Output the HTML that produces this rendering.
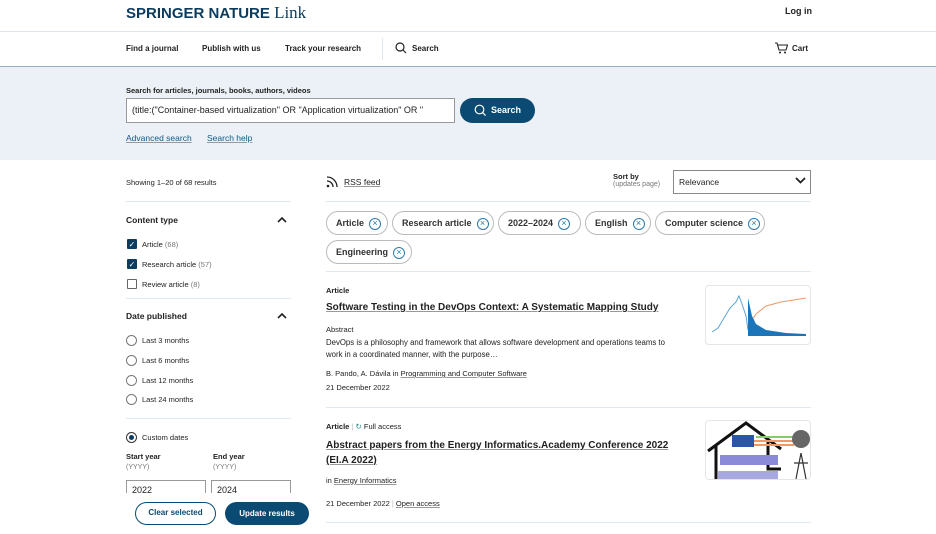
<!DOCTYPE html>
<html><head><meta charset="utf-8"><style>
*{margin:0;padding:0;box-sizing:border-box}
body{width:936px;height:534px;overflow:hidden;background:#fff;font-family:"Liberation Sans",sans-serif;color:#222;font-size:8px;position:relative}
.a{position:absolute;white-space:nowrap}
.b{font-weight:bold}
.u{text-decoration:underline;text-decoration-color:#999}
.hr{position:absolute;height:1px;background:#dfe9f2}
.chip{position:absolute;height:24px;border:1px solid #bbb;border-radius:12px;font-weight:bold;font-size:9px;line-height:22px;padding-left:9px;color:#333}
.x{display:inline-block;width:12px;height:12px;border:1.3px solid #2a7ab0;border-radius:50%;color:#2a7ab0;font-size:9px;line-height:9px;text-align:center;margin-left:5px;vertical-align:middle;font-weight:normal}
.cb{position:absolute;width:10px;height:10px;border:1px solid #666;border-radius:1px}
.cb.on{background:#0b3c5d;border-color:#0b3c5d;color:#fff;font-size:8px;line-height:9px;text-align:center}
.rd{position:absolute;width:11px;height:11px;border:1px solid #777;border-radius:50%}
.car{position:absolute}
</style></head><body>
<div class="a b" style="left:126px;top:3px;font-size:15px;color:#0b3c5d;letter-spacing:0px">SPRINGER NATURE <span style="font-family:'Liberation Serif',serif;font-weight:normal;font-size:17px">Link</span></div>
<div class="a b" style="left:785px;top:6px;font-size:9px">Log in</div>
<div class="hr" style="left:0;top:31px;width:936px;background:#dde6ee"></div>
<div class="a b" style="left:126px;top:44px">Find a journal</div>
<div class="a b" style="left:202px;top:44px">Publish with us</div>
<div class="a b" style="left:285px;top:44px">Track your research</div>
<div style="position:absolute;left:382px;top:38px;width:1px;height:22px;background:#dde6ee"></div>
<svg class="a" style="left:395px;top:42px" width="12" height="12" viewBox="0 0 12 12"><circle cx="5" cy="5" r="4" fill="none" stroke="#222" stroke-width="1.2"/><path d="M8 8l3 3" stroke="#222" stroke-width="1.2"/></svg>
<div class="a b" style="left:412px;top:44px">Search</div>
<svg class="a" style="left:775px;top:42px" width="13" height="12" viewBox="0 0 13 12"><path d="M0 1h2l2 7h7l1.5-5H3" fill="none" stroke="#222" stroke-width="1.1"/><circle cx="5" cy="10.5" r="1" fill="#222"/><circle cx="10" cy="10.5" r="1" fill="#222"/></svg>
<div class="a b" style="left:792px;top:44px">Cart</div>
<div style="position:absolute;left:0;top:66px;width:936px;height:94px;background:#ebf1f6;border-top:1px solid #99aab8"></div>
<div class="a b" style="left:126px;top:86px;font-size:7.5px">Search for articles, journals, books, authors, videos</div>
<div style="position:absolute;left:126px;top:98px;width:329px;height:25px;background:#fff;border:1px solid #999;overflow:hidden;font-size:9px;line-height:23px;padding-left:5px;white-space:nowrap">(title:("Container-based virtualization" OR "Application virtualization" OR "</div>
<div style="position:absolute;left:460px;top:98px;width:75px;height:25px;background:#0b4a72;border-radius:13px;color:#fff;font-weight:bold;font-size:9px;line-height:25px;padding-left:31px">Search</div>
<svg class="a" style="left:474px;top:104px" width="13" height="13" viewBox="0 0 13 13"><circle cx="5.5" cy="5.5" r="4.3" fill="none" stroke="#fff" stroke-width="1.2"/><path d="M8.6 8.6l3 3" stroke="#fff" stroke-width="1.2"/></svg>
<div class="a u" style="left:126px;top:133px;color:#0b5a8a;font-size:8.5px">Advanced search</div>
<div class="a u" style="left:207px;top:133px;color:#0b5a8a;font-size:8.5px">Search help</div>

<div class="a" style="left:126px;top:178px;font-size:7.5px">Showing 1–20 of 68 results</div>
<div class="hr" style="left:126px;top:201px;width:165px"></div>
<div class="a b" style="left:126px;top:215px;font-size:8.5px">Content type</div>
<svg class="car" style="left:277px;top:216px" width="10" height="7" viewBox="0 0 10 7"><path d="M1 6l4-4 4 4" fill="none" stroke="#222" stroke-width="1.6"/></svg>
<div class="cb on" style="left:127px;top:239px">✓</div><div class="a" style="left:142px;top:240px;font-size:7.5px">Article <span style="color:#777">(68)</span></div>
<div class="cb on" style="left:127px;top:259px">✓</div><div class="a" style="left:142px;top:260px;font-size:7.5px">Research article <span style="color:#777">(57)</span></div>
<div class="cb" style="left:127px;top:279px"></div><div class="a" style="left:142px;top:280px;font-size:7.5px">Review article <span style="color:#777">(8)</span></div>
<div class="hr" style="left:126px;top:298px;width:165px"></div>
<div class="a b" style="left:126px;top:311px;font-size:8.5px">Date published</div>
<svg class="car" style="left:277px;top:312px" width="10" height="7" viewBox="0 0 10 7"><path d="M1 6l4-4 4 4" fill="none" stroke="#222" stroke-width="1.6"/></svg>
<div class="rd" style="left:126px;top:335px"></div><div class="a" style="left:142px;top:336px;font-size:7.5px">Last 3 months</div>
<div class="rd" style="left:126px;top:355px"></div><div class="a" style="left:142px;top:356px;font-size:7.5px">Last 6 months</div>
<div class="rd" style="left:126px;top:375px"></div><div class="a" style="left:142px;top:376px;font-size:7.5px">Last 12 months</div>
<div class="rd" style="left:126px;top:394px"></div><div class="a" style="left:142px;top:395px;font-size:7.5px">Last 24 months</div>
<div class="hr" style="left:126px;top:418px;width:165px"></div>
<div class="rd" style="left:126px;top:432px;border-color:#333"><div style="position:absolute;left:2px;top:2px;width:5px;height:5px;border-radius:50%;background:#0b3c5d"></div></div>
<div class="a" style="left:142px;top:433px;font-size:7.5px">Custom dates</div>
<div class="a b" style="left:126px;top:452px;font-size:7.5px">Start year</div>
<div class="a" style="left:126px;top:464px;font-size:7px;color:#777">(YYYY)</div>
<div class="a b" style="left:213px;top:452px;font-size:7.5px">End year</div>
<div class="a" style="left:213px;top:464px;font-size:7px;color:#777">(YYYY)</div>
<div style="position:absolute;left:126px;top:480px;width:80px;height:20px;border:1px solid #999;border-bottom:none;font-size:9px;padding:4px 5px">2022</div>
<div style="position:absolute;left:211px;top:480px;width:80px;height:20px;border:1px solid #999;border-bottom:none;font-size:9px;padding:4px 5px">2024</div>
<div style="position:absolute;left:120px;top:493px;width:180px;height:41px;background:#fff;"></div>
<div style="position:absolute;left:135px;top:502px;width:81px;height:23px;border:1.5px solid #0b4a72;border-radius:12px;color:#0b4a72;font-weight:bold;font-size:8px;line-height:20px;text-align:center;background:#fff">Clear selected</div>
<div style="position:absolute;left:225px;top:502px;width:84px;height:23px;background:#0b4a72;border-radius:12px;color:#fff;font-weight:bold;font-size:8px;line-height:23px;text-align:center">Update results</div>

<svg class="a" style="left:326px;top:175px" width="13" height="13" viewBox="0 0 13 13"><circle cx="2" cy="11" r="1.3" fill="#222"/><path d="M1 6a6 6 0 0 1 6 6M1 2a10 10 0 0 1 10 10" fill="none" stroke="#222" stroke-width="1.3"/></svg>
<div class="a u" style="left:344px;top:177px;font-size:8.5px">RSS feed</div>
<div class="a b" style="left:613px;top:172px;font-size:7.5px">Sort by</div>
<div class="a" style="left:613px;top:181px;font-size:7px;color:#777">(updates page)</div>
<div style="position:absolute;left:673px;top:170px;width:138px;height:24px;border:1px solid #888;font-size:8.5px;line-height:22px;padding-left:5px">Relevance</div>
<svg class="a" style="left:795px;top:177px" width="11" height="8" viewBox="0 0 11 8"><path d="M1 1l4.5 4.5L10 1" fill="none" stroke="#222" stroke-width="1.8"/></svg>
<div class="hr" style="left:326px;top:201px;width:485px"></div>
<div class="chip" style="left:326px;top:211px;width:62px">Article<span class="x">×</span></div>
<div class="chip" style="left:392px;top:211px;width:102px">Research article<span class="x">×</span></div>
<div class="chip" style="left:498px;top:211px;width:83px">2022–2024<span class="x">×</span></div>
<div class="chip" style="left:585px;top:211px;width:66px">English<span class="x">×</span></div>
<div class="chip" style="left:655px;top:211px;width:110px">Computer science<span class="x">×</span></div>
<div class="chip" style="left:326px;top:240px;width:86px">Engineering<span class="x">×</span></div>
<div class="hr" style="left:326px;top:271px;width:485px"></div>
<div class="a b" style="left:326px;top:286px;font-size:7.5px">Article</div>
<div class="a b u" style="left:326px;top:302px;font-size:10px;color:#222">Software Testing in the DevOps Context: A Systematic Mapping Study</div>
<div class="a" style="left:326px;top:325px;font-size:7.5px">Abstract</div>
<div class="a" style="left:326px;top:337px;font-size:7.8px;line-height:12px">DevOps is a philosophy and framework that allows software development and operations teams to<br>work in a coordinated manner, with the purpose…</div>
<div class="a" style="left:326px;top:369px;font-size:7.5px">B. Pando, A. Dávila in <span class="u">Programming and Computer Software</span></div>
<div class="a" style="left:326px;top:383px;font-size:7.5px">21 December 2022</div>
<div style="position:absolute;left:705px;top:285px;width:106px;height:60px;border:1px solid #e5e5e5;border-radius:4px;overflow:hidden">
<svg width="106" height="60" viewBox="0 0 106 60"><path d="M6 46 L12 42 L18 32 L24 22 L30 16 L33 10 L36 18 L40 30 L42 44" fill="none" stroke="#5ba3d8" stroke-width="1"/><path d="M42 40 L50 28 L60 20 L75 16 L100 12" fill="none" stroke="#e89a6a" stroke-width="1"/><path d="M42 48 L42 12 L46 30 L50 38 L60 44 L80 47 L100 48 L100 50 L42 50Z" fill="#1b75b8"/></svg></div>
<div class="hr" style="left:326px;top:407px;width:485px"></div>
<div class="a" style="left:326px;top:422px;font-size:7.5px"><b>Article</b> <span style="color:#bbb">|</span> <span style="color:#2a8a8a">↻</span> Full access</div>
<div class="a b u" style="left:326px;top:438px;font-size:10px;line-height:15px">Abstract papers from the Energy Informatics.Academy Conference 2022<br>(EI.A 2022)</div>
<div class="a" style="left:326px;top:476px;font-size:7.5px">in <span class="u">Energy Informatics</span></div>
<div class="a" style="left:326px;top:499px;font-size:7.5px">21 December 2022 <span style="color:#bbb">|</span> <span class="u">Open access</span></div>
<div style="position:absolute;left:705px;top:420px;width:106px;height:60px;border:1px solid #e5e5e5;border-radius:4px;overflow:hidden">
<svg width="106" height="60" viewBox="0 0 106 60"><path d="M2 30 L40 2 L75 28 M10 24 V60 M62 18 V48 H75" fill="none" stroke="#111" stroke-width="3"/><rect x="26" y="14" width="22" height="12" fill="#2a56a8"/><rect x="14" y="34" width="58" height="10" fill="#8a8ad8"/><rect x="12" y="50" width="60" height="10" fill="#a8a8e0"/><path d="M48 20 H88 M48 24 H88" stroke="#ee9966" stroke-width="2"/><path d="M50 16 H88" stroke="#88cc66" stroke-width="2"/><circle cx="95" cy="18" r="9" fill="#666"/><path d="M95 32 L90 58 M95 32 L100 58 M88 42 H102" stroke="#333" stroke-width="1.2"/></svg></div>
<div class="hr" style="left:326px;top:522px;width:485px"></div>
</body></html>
